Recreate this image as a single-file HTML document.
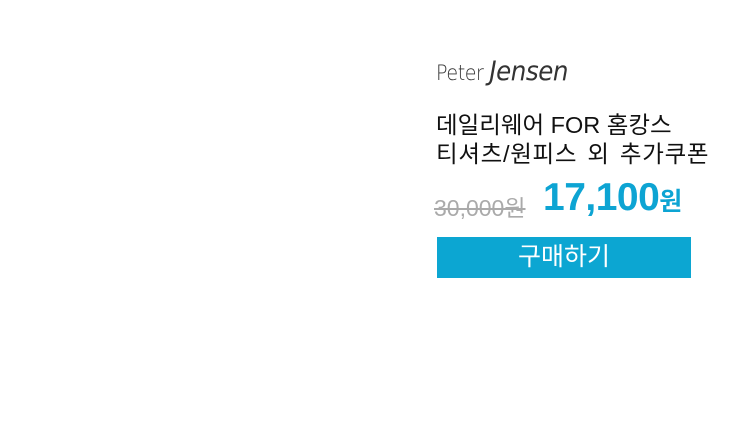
<!DOCTYPE html><html><head><meta charset="utf-8"><style>
body{margin:0;width:750px;height:435px;background:#fff;position:relative;overflow:hidden;font-family:"Liberation Sans","Noto Sans CJK KR",sans-serif}
.a{position:absolute;white-space:nowrap}
</style></head><body>
<div class="a" style="left:436px;top:56px;font-size:22px;color:#333;font-family:'DejaVu Sans',sans-serif;font-weight:200;letter-spacing:-0.5px;transform:scaleX(0.91);transform-origin:left"><span style="font-size:21px">Peter</span> <span style="font-size:27px;font-style:italic">Jensen</span></div>
<div class="a" style="left:436px;top:111px;font-size:23.5px;line-height:29px;color:#111">데일리웨어 FOR 홈캉스<br><span style="word-spacing:3px;letter-spacing:0.7px">티셔츠/원피스 외 추가쿠폰</span></div>
<div class="a" style="left:434px;top:189px;font-size:23px;color:#aaa;text-decoration:line-through">30,000원</div>
<div class="a" style="left:543px;top:176px;font-size:39px;font-weight:bold;color:#0da4d3;letter-spacing:-0.5px">17,100<span style="font-size:25px">원</span></div>
<div class="a" style="left:437px;top:237px;width:254px;height:41px;background:#0ca6d2;color:#fff;font-size:25px;line-height:41px;text-align:center">구매하기</div>
</body></html>
